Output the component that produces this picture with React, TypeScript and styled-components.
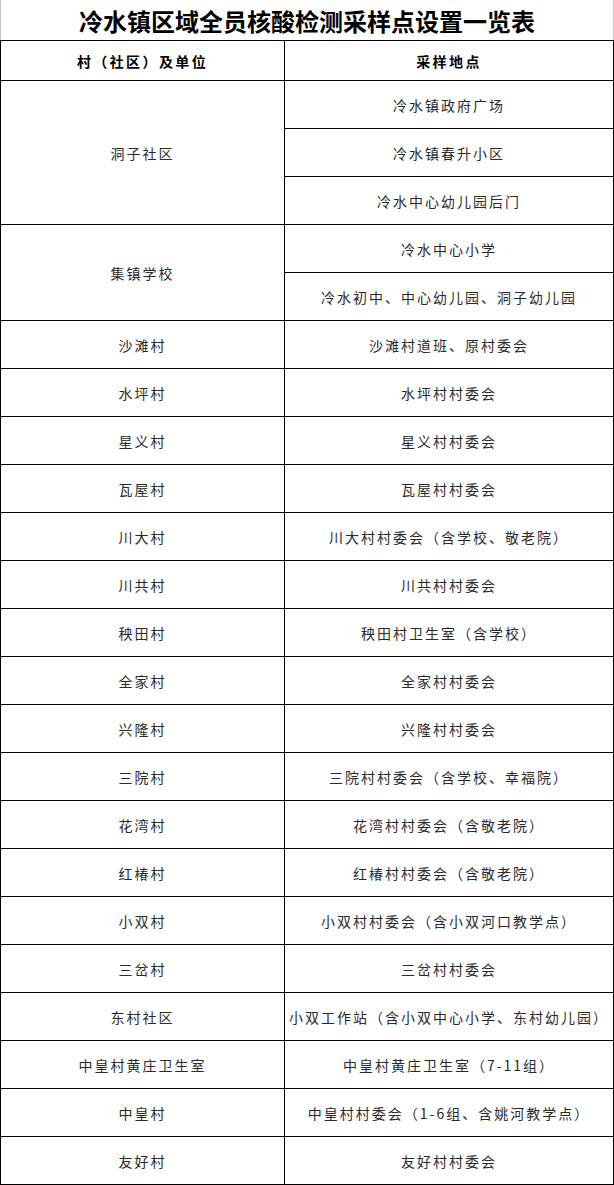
import { ReactElement } from "react"
import styled, { createGlobalStyle } from "styled-components"

const GlobalStyle = createGlobalStyle`
  html, body {
    margin: 0;
    padding: 0;
    background: #fff;
  }
  body {
    font-family: "Noto Sans CJK SC", "Noto Sans", sans-serif;
    color: #222;
  }
`

const Page = styled.div`
  width: 614px;
`

const Title = styled.h1`
  margin: 0;
  height: 40px;
  box-sizing: border-box;
  border-left: 1px solid #c8c8c8;
  border-right: 1px solid #c8c8c8;
  display: flex;
  align-items: center;
  justify-content: center;
  padding-top: 1px;
  font-size: 24px;
  font-weight: 700;
  line-height: 1;
  color: #000;
`

const Table = styled.table`
  width: 614px;
  border-collapse: collapse;
  table-layout: fixed;
`

const HeadCell = styled.th`
  height: 39px;
  padding: 0;
  border: 1px solid #000;
  font-size: 14px;
  font-weight: 700;
  letter-spacing: 2.4px;
  color: #000;
  text-align: center;
  vertical-align: middle;
`

const Cell = styled.td`
  height: 47px;
  padding: 0;
  border: 1px solid #000;
  font-size: 14px;
  letter-spacing: 2px;
  color: #2a2a2a;
  text-align: center;
  vertical-align: middle;
  white-space: nowrap;
`

type Group = { unit: string; sites: string[] }

const groups: Group[] = [
  { unit: "洞子社区", sites: ["冷水镇政府广场", "冷水镇春升小区", "冷水中心幼儿园后门"] },
  { unit: "集镇学校", sites: ["冷水中心小学", "冷水初中、中心幼儿园、洞子幼儿园"] },
  { unit: "沙滩村", sites: ["沙滩村道班、原村委会"] },
  { unit: "水坪村", sites: ["水坪村村委会"] },
  { unit: "星义村", sites: ["星义村村委会"] },
  { unit: "瓦屋村", sites: ["瓦屋村村委会"] },
  { unit: "川大村", sites: ["川大村村委会（含学校、敬老院）"] },
  { unit: "川共村", sites: ["川共村村委会"] },
  { unit: "秧田村", sites: ["秧田村卫生室（含学校）"] },
  { unit: "全家村", sites: ["全家村村委会"] },
  { unit: "兴隆村", sites: ["兴隆村村委会"] },
  { unit: "三院村", sites: ["三院村村委会（含学校、幸福院）"] },
  { unit: "花湾村", sites: ["花湾村村委会（含敬老院）"] },
  { unit: "红椿村", sites: ["红椿村村委会（含敬老院）"] },
  { unit: "小双村", sites: ["小双村村委会（含小双河口教学点）"] },
  { unit: "三岔村", sites: ["三岔村村委会"] },
  { unit: "东村社区", sites: ["小双工作站（含小双中心小学、东村幼儿园）"] },
  { unit: "中皇村黄庄卫生室", sites: ["中皇村黄庄卫生室（7-11组）"] },
  { unit: "中皇村", sites: ["中皇村村委会（1-6组、含姚河教学点）"] },
  { unit: "友好村", sites: ["友好村村委会"] },
]

function App(): ReactElement {
  return (
    <Page>
      <GlobalStyle />
      <Title lang="zh-CN">冷水镇区域全员核酸检测采样点设置一览表</Title>
      <Table lang="zh-CN">
        <colgroup>
          <col style={{ width: 284 }} />
          <col />
        </colgroup>
        <thead>
          <tr>
            <HeadCell>村（社区）及单位</HeadCell>
            <HeadCell>采样地点</HeadCell>
          </tr>
        </thead>
        <tbody>
          {groups.flatMap((g) =>
            g.sites.map((site, i) => (
              <tr key={g.unit + site}>
                {i === 0 && <Cell rowSpan={g.sites.length}>{g.unit}</Cell>}
                <Cell>{site}</Cell>
              </tr>
            ))
          )}
        </tbody>
      </Table>
    </Page>
  )
}

export default App
